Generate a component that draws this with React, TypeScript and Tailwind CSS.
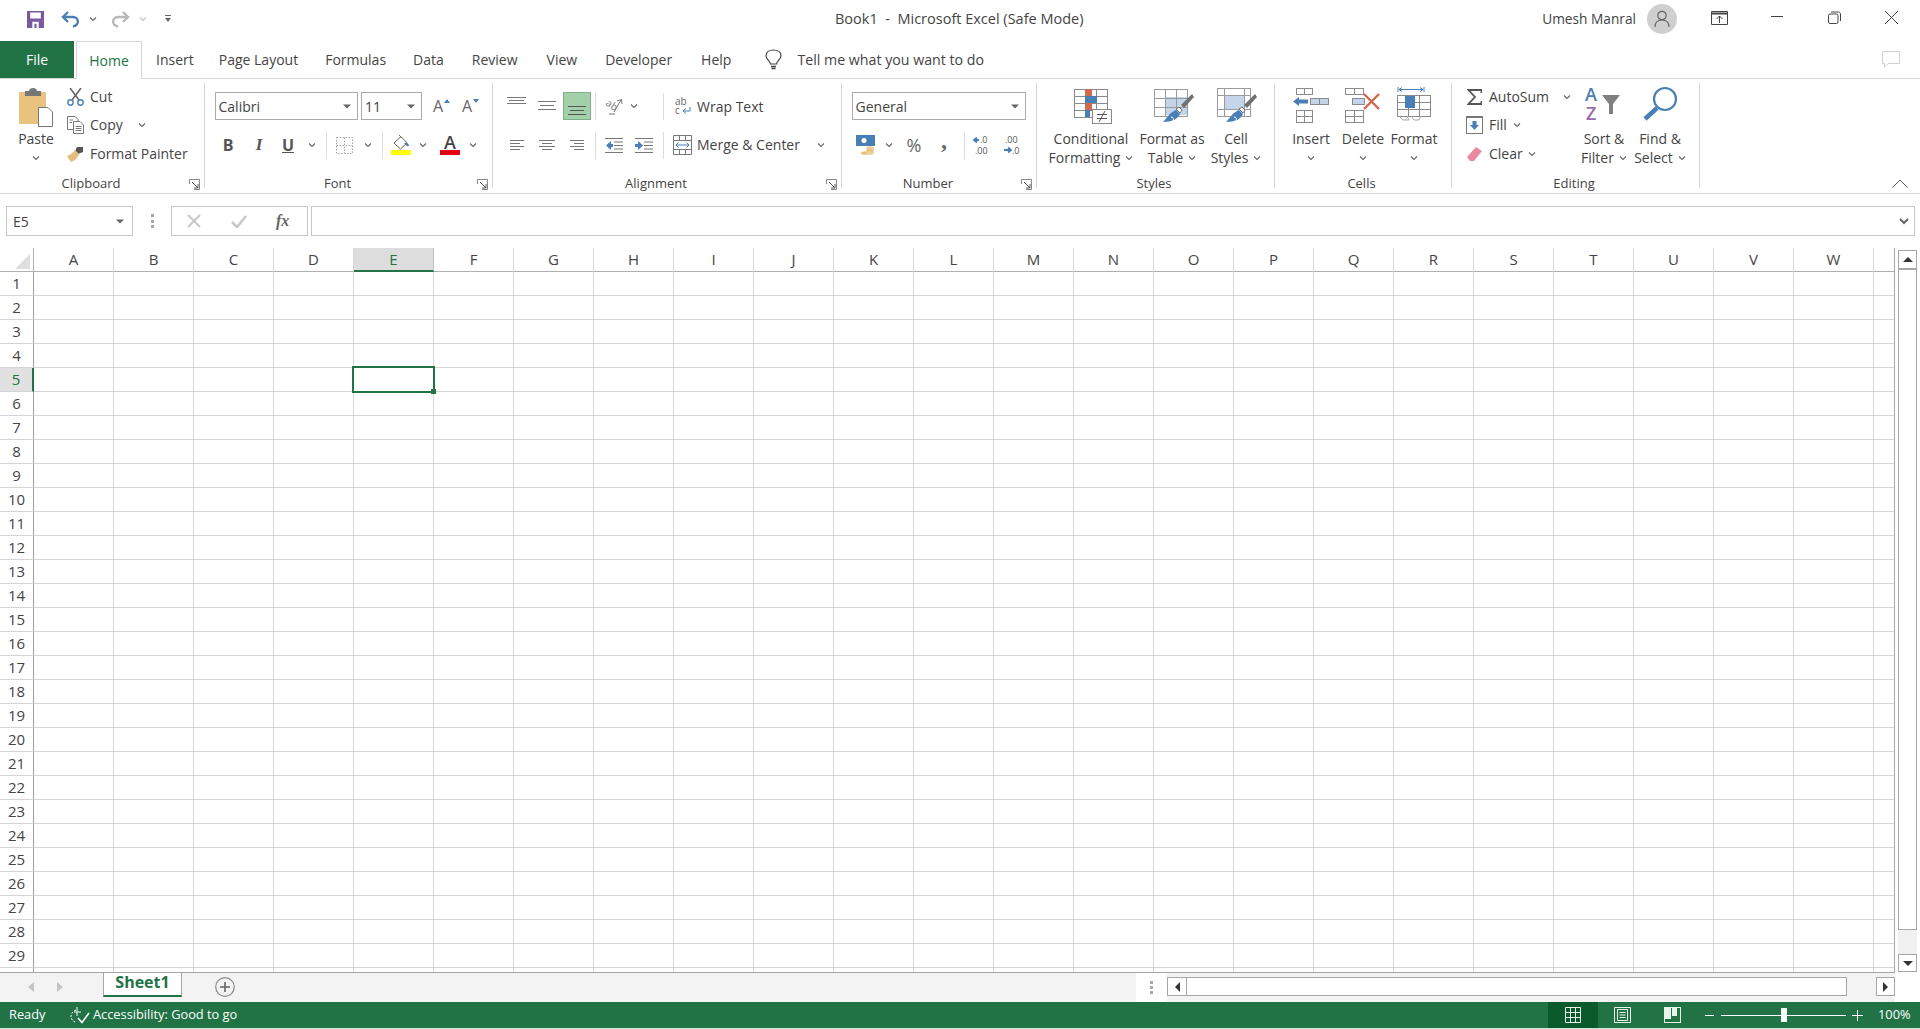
import React from "react";

const Chev = ({ className = "" }: { className?: string }) => (
  <svg width="8" height="6" viewBox="0 0 8 6" className={"flex-none " + className}>
    <path d="M1 1.5 L4 4.5 L7 1.5" fill="none" stroke="#666" strokeWidth="1.1" />
  </svg>
);

const Caret = ({ className = "" }: { className?: string }) => (
  <svg width="8" height="5" viewBox="0 0 8 5" className={"flex-none " + className}>
    <path d="M0 0.5 H8 L4 4.5 Z" fill="#666" />
  </svg>
);

const Sep = ({ className = "" }: { className?: string }) => (
  <div className={"w-px h-[27px] bg-[#dcdcdc] flex-none " + className} />
);

const Launcher = () => (
  <svg width="11" height="11" viewBox="0 0 11 11" className="flex-none mt-[4px] mr-[4px]">
    <path d="M0.5 5 V0.5 H10.5 V10.5 H5" fill="none" stroke="#888" />
    <path d="M3 3 L9 9 M9 5 V9 H5" fill="none" stroke="#555" />
  </svg>
);

const Lines = ({ w, h, rows, color = "#777", className = "" }: { w: number; h: number; rows: number[][]; color?: string; className?: string }) => (
  <svg width={w} height={h} viewBox={`0 0 ${w} ${h}`} className={"flex-none " + className}>
    {rows.map((r, i) => (
      <path key={i} d={`M${r[0]} ${r[2] + 0.5} H${r[1]}`} stroke={color} strokeWidth="1" />
    ))}
  </svg>
);

const Group = ({ w, label, launcher = false, children }: { w: string; label: string; launcher?: boolean; children: React.ReactNode }) => (
  <div className={"flex flex-col flex-none h-[105px] border-r border-[#d4d4d4] " + w}>
    <div className="h-[92px] flex-none">{children}</div>
    <div className="flex h-[13px]">
      <div className={"flex-1 text-center text-[13px] leading-[16px] text-[#444] " + (launcher ? "pr-[7px]" : "pr-[3px]")}>{label}</div>
      {launcher && <Launcher />}
    </div>
  </div>
);

const Row1 = ({ children }: { children: React.ReactNode }) => <div className="flex items-center h-[28px] mt-[9px]">{children}</div>;
const Row2 = ({ children }: { children: React.ReactNode }) => <div className="flex items-center h-[28px] mt-[11px]">{children}</div>;
const Small = ({ icon, label, tw, mt = "" }: { icon: React.ReactNode; label: string; tw: string; mt?: string }) => (
  <div className={"flex items-center h-[28px] " + mt}>
    <div className="w-[17px] flex-none flex justify-center">{icon}</div>
    <span className={"ml-[6px] flex-none whitespace-nowrap mt-[-2px] " + tw}>{label}</span>
  </div>
);

const Big = ({ icon, lines, w, ml = "", chevOwn = false }: { icon: React.ReactNode; lines: string[]; w: string; ml?: string; chevOwn?: boolean }) => (
  <div className={"flex flex-col items-center flex-none " + w + " " + ml}>
    <div className="h-[46px] pt-[5px] flex justify-center">{icon}</div>
    <div className="leading-[19px] text-center whitespace-nowrap">{lines[0]}</div>
    {chevOwn ? (
      <div className="h-[19px] flex items-center"><Chev /></div>
    ) : (
      <div className="leading-[19px] text-center whitespace-nowrap flex items-center">
        {lines[1]}
        <Chev className="ml-[5px]" />
      </div>
    )}
  </div>
);

const Brush = () => (
  <g>
    <path d="M38 6 L40 9 L30 20 L27 17 Z" fill="#707070" />
    <path d="M25 19 L28 22 L26 25 L22 21 Z" fill="#fff" stroke="#707070" />
    <path d="M22 22 L26 26 C24 31 18 34 9 34 C13 30 16 24 22 22 Z" fill="#4a80b8" />
    <path d="M17 29 C19 29 20 31 19 33" fill="none" stroke="#fff" strokeWidth="1" />
  </g>
);

const GridPath = ({ x, y, cw, ch, nx, ny, stroke = "#8a8a8a" }: { x: number; y: number; cw: number; ch: number; nx: number; ny: number; stroke?: string }) => {
  const ds: string[] = [];
  for (let i = 0; i <= nx; i++) ds.push(`M${x + i * cw + 0.5} ${y} V${y + ny * ch}`);
  for (let j = 0; j <= ny; j++) ds.push(`M${x} ${y + j * ch + 0.5} H${x + nx * cw + 1}`);
  return <path d={ds.join(" ")} stroke={stroke} strokeWidth="1" fill="none" />;
};

const ColumnHeads = "ABCDEFGHIJKLMNOPQRSTUVW".split("");

const Corner = () => (
  <svg width="15" height="15" viewBox="0 0 15 15"><path d="M15 0 V15 H0 Z" fill="#dfdfdf" /></svg>
);

export default function App() {
  const rows = Array.from({ length: 30 }, (_, i) => i + 1);
  return (
    <div className="w-[1920px] h-[1029px] flex flex-col overflow-hidden bg-white text-[14px] text-[#444] font-['Open_Sans','Noto_Sans',sans-serif]">
      {/* Title bar */}
      <div className="h-[41px] flex-none flex items-center text-[#444]">
        <svg width="17" height="17" viewBox="0 0 16 16" className="ml-[27px] flex-none mt-[-3px]">
          <path fillRule="evenodd" d="M0 0 H16 V16 H0 Z M3 1.5 V7 H13 V1.5 Z M5 10 V16 H11 V10 Z" fill="#7a5a9f" />
          <rect x="7" y="12" width="2" height="4" fill="#7a5a9f" />
        </svg>
        <svg width="20" height="17" viewBox="0 0 20 17" className="ml-[17px] flex-none mt-[-3px]">
          <path d="M7 1 L2 6 L7 11 M2 6 H12 C18 6 19 14 12 15.5" fill="none" stroke="#4a7fb5" strokeWidth="2.4" />
        </svg>
        <Chev className="ml-[8px] mt-[-3px]" />
        <svg width="20" height="17" viewBox="0 0 20 17" className="ml-[13px] flex-none mt-[-3px]">
          <path d="M13 1 L18 6 L13 11 M18 6 H8 C2 6 1 14 8 15.5" fill="none" stroke="#b8b8b8" strokeWidth="2.4" />
        </svg>
        <Chev className="ml-[9px] opacity-40 mt-[-3px]" />
        <svg width="8" height="8" viewBox="0 0 8 8" className="ml-[17px] flex-none mt-[-3px]">
          <path d="M1 0.5 H7" stroke="#666" />
          <path d="M1 3 H7 L4 7 Z" fill="#666" />
        </svg>
        <div className="flex-none w-[251px] ml-[663px] text-[14.5px] whitespace-nowrap mt-[-3px]">Book1&nbsp; -&nbsp; Microsoft Excel (Safe Mode)</div>
        <div className="flex-none ml-[454px] w-[96px] text-right text-[13.7px] whitespace-nowrap mt-[-3px]">Umesh Manral</div>
        <div className="w-[30px] h-[30px] rounded-full bg-[#cfcfcf] ml-[11px] flex-none flex items-center justify-center mt-[-3px]">
          <svg width="18" height="18" viewBox="0 0 18 18">
            <circle cx="9" cy="5.5" r="4.2" fill="none" stroke="#666" strokeWidth="1.2" />
            <path d="M2 17 C2 12 5 10 9 10 C13 10 16 12 16 17" fill="none" stroke="#666" strokeWidth="1.2" />
          </svg>
        </div>
        <svg width="17" height="14" viewBox="0 0 17 14" className="ml-[34px] flex-none mt-[-6px]">
          <path d="M0.5 0.5 H16.5 V13.5 H0.5 Z" fill="none" stroke="#444" />
          <path d="M1 2.5 H16" stroke="#444" strokeWidth="2" />
          <path d="M8.5 12 V5 M5.5 8 L8.5 5 L11.5 8" fill="none" stroke="#444" />
        </svg>
        <div className="w-[12px] h-px bg-[#444] ml-[43px] flex-none mt-[-8px]" />
        <svg width="13" height="13" viewBox="0 0 13 13" className="ml-[45px] flex-none mt-[-6px]">
          <rect x="0.5" y="3" width="9.5" height="9.5" rx="1.5" fill="none" stroke="#444" />
          <path d="M3 1 H10.5 C11.5 1 12.5 2 12.5 3 V10" fill="none" stroke="#444" />
        </svg>
        <svg width="15" height="15" viewBox="0 0 15 15" className="ml-[43px] flex-none mt-[-6px]">
          <path d="M1 1 L14 14 M14 1 L1 14" stroke="#444" />
        </svg>
      </div>

      {/* Tabs */}
      <div className="h-[38px] flex-none flex items-stretch border-b border-[#d4d4d4]">
        <div className="w-[74px] bg-[#217346] text-white flex items-center justify-center">File</div>
        <div className="w-[66px] ml-[2px] mb-[-1px] bg-white border border-b-0 border-[#d4d4d4] text-[#217346] flex items-center justify-center">Home</div>
        {[
          ["Insert", "ml-[14px]"],
          ["Page Layout", "ml-[25px]"],
          ["Formulas", "ml-[27px]"],
          ["Data", "ml-[27px]"],
          ["Review", "ml-[28px]"],
          ["View", "ml-[29px]"],
          ["Developer", "ml-[28px]"],
          ["Help", "ml-[29px]"],
        ].map(([t, c]) => (
          <div key={t} className={"flex items-center whitespace-nowrap " + c}>{t}</div>
        ))}
        <div className="flex items-center ml-[34px]">
          <svg width="17" height="21" viewBox="0 0 17 21">
            <path d="M5.5 15 C5.5 12 1 10.5 1 6.8 C1 3.3 4.2 1 8.5 1 C12.8 1 16 3.3 16 6.8 C16 10.5 11.5 12 11.5 15 Z" fill="none" stroke="#444" strokeWidth="1.2" />
            <path d="M6 17.5 H11 M6.5 19.5 H10.5" stroke="#444" strokeWidth="1.3" />
          </svg>
        </div>
        <div className="flex items-center ml-[15px] whitespace-nowrap text-[14.2px]">Tell me what you want to do</div>
        <div className="flex-1 flex items-center justify-end pr-[20px]">
          <svg width="18" height="17" viewBox="0 0 18 17">
            <path d="M0.5 0.5 H17.5 V12.5 H6 L2.5 16 V12.5 H0.5 Z" fill="none" stroke="#cfcfcf" />
          </svg>
        </div>
      </div>

      {/* Ribbon */}
      <div className="h-[115px] flex-none flex pt-[4px] border-b border-[#d4d4d4]">
        <Group w="w-[205px]" label="Clipboard" launcher>
          <div className="flex">
            <div className="w-[66px] ml-[3px] flex flex-col items-center flex-none">
              <div className="h-[46px] pt-[5px]">
                <svg width="34" height="39" viewBox="0 0 34 39">
                  <rect x="0" y="4" width="27" height="32" rx="1" fill="#e9c27f" />
                  <rect x="6" y="3" width="16" height="5" fill="#777" />
                  <path d="M10 3 C10 -1 18 -1 18 3 Z" fill="#777" />
                  <path d="M19.5 19.5 H29 L33.5 24 V38.5 H19.5 Z" fill="#fff" stroke="#777" />
                </svg>
              </div>
              <div className="leading-[19px]">Paste</div>
              <div className="h-[19px] flex items-center"><Chev /></div>
            </div>
            <div className="flex flex-col ml-[-2px] flex-none">
              <Small
                label="Cut"
                tw=""
                icon={
                  <svg width="17" height="18" viewBox="0 0 17 18">
                    <path d="M3 0 L12 12 M14 0 L5 12" stroke="#666" strokeWidth="1.6" />
                    <circle cx="3.5" cy="14.5" r="2.7" fill="none" stroke="#4a7fb5" strokeWidth="1.4" />
                    <circle cx="13.5" cy="14.5" r="2.7" fill="none" stroke="#4a7fb5" strokeWidth="1.4" />
                  </svg>
                }
              />
              <div className="flex items-center">
                <Small
                  label="Copy"
                  tw="w-[48px]"
                  icon={
                    <svg width="17" height="18" viewBox="0 0 17 18">
                      <path d="M0.5 0.5 H8 L11 3.5 V13.5 H0.5 Z" fill="#fff" stroke="#777" />
                      <path d="M6.5 5.5 H13 L16.5 9 V17.5 H6.5 Z" fill="#fff" stroke="#777" />
                      <path d="M8.5 10.5 H14.5 M8.5 12.5 H14.5 M8.5 14.5 H14.5 M2.5 4 H6 M2.5 6.5 H5" stroke="#777" />
                    </svg>
                  }
                />
                <Chev />
              </div>
              <Small
                label="Format Painter"
                tw=""
                mt="mt-[1px]"
                icon={
                  <svg width="17" height="16" viewBox="0 0 17 16">
                    <path d="M10 1 L16 1 L16 6 L11 8 L8 5 Z" fill="#555" />
                    <path d="M8 4 L12 8 C11 12 7 15 4 16 L0 10 C3 9 6 7 8 4 Z" fill="#e4bd7f" />
                  </svg>
                }
              />
            </div>
          </div>
        </Group>

        <Group w="w-[288px]" label="Font" launcher>
          <Row1>
            <div className="ml-[10px] w-[143px] h-[28px] border border-[#ababab] flex items-center justify-between px-[2.5px] pr-[6px]">
              <span>Calibri</span>
              <Caret />
            </div>
            <div className="ml-[3px] w-[61px] h-[28px] border border-[#ababab] flex items-center justify-between pl-[3px] pr-[6px]">
              <span>11</span>
              <Caret />
            </div>
            <div className="ml-[11px] w-[13px] text-[16px] leading-none text-[#666] flex-none">A</div>
            <svg width="6" height="4" viewBox="0 0 6 4" className="flex-none mb-[11px] ml-[-2px]"><path d="M0 4 L3 0 L6 4 Z" fill="#4a7fb5" /></svg>
            <div className="ml-[12px] w-[13px] text-[16px] leading-none text-[#666] flex-none">A</div>
            <svg width="6" height="4" viewBox="0 0 6 4" className="flex-none mb-[11px] ml-[-2px]"><path d="M0 0 L3 4 L6 0 Z" fill="#4a7fb5" /></svg>
          </Row1>
          <Row2>
            <div className="ml-[11px] w-[24px] text-center text-[16px] font-bold text-[#555] flex-none">B</div>
            <div className="ml-[7px] w-[24px] text-center text-[17px] font-bold italic text-[#555] flex-none font-['Liberation_Serif',serif]">I</div>
            <div className="ml-[5px] w-[24px] text-center text-[16px] font-bold text-[#555] flex-none underline">U</div>
            <Chev className="ml-[8px]" />
            <Sep className="ml-[10px]" />
            <svg width="17" height="17" viewBox="0 0 17 17" className="ml-[9px] flex-none">
              <path d="M0.5 0.5 H16.5 V16.5 H0.5 Z M0.5 8.5 H16.5 M8.5 0.5 V16.5" fill="none" stroke="#a5a5a5" strokeDasharray="1.5 1.5" />
            </svg>
            <Chev className="ml-[11px]" />
            <Sep className="ml-[10px]" />
            <svg width="20" height="20" viewBox="0 0 20 20" className="ml-[8px] flex-none">
              <path d="M3 8 L10 1.5 L16 8 L9.5 14 Z" fill="#fff" stroke="#666" />
              <path d="M8 0 L11 3" stroke="#666" />
              <path d="M13 8 L16 7.5 L18 10 C18 11.5 16 11.5 15.5 10.5 Z" fill="#4a7fb5" />
              <rect x="0" y="15" width="20" height="5" fill="#ffff00" />
            </svg>
            <Chev className="ml-[8px]" />
            <div className="ml-[13px] w-[20px] flex flex-col items-center flex-none">
              <div className="text-[18px] leading-[15px] font-semibold text-[#444]">A</div>
              <div className="w-[20px] h-[5px] bg-[#e60012]" />
            </div>
            <Chev className="ml-[9px]" />
          </Row2>
        </Group>

        <Group w="w-[349px]" label="Alignment" launcher>
          <Row1>
            <Lines className="ml-[14px] mb-[10px]" w={19} h={8} rows={[[0, 19, 0], [2, 17, 3], [0, 19, 6]]} />
            <Lines className="ml-[12px]" w={18} h={10} rows={[[0, 18, 0], [2, 16, 4], [0, 18, 8]]} />
            <div className="ml-[7px] w-[28px] h-[28px] bg-[#a3cfa9] border border-[#7fb08a] flex items-end justify-center pb-[4px] flex-none">
              <Lines w={18} h={9} rows={[[0, 18, 0], [2, 16, 4], [0, 18, 8]]} color="#555" />
            </div>
            <Sep className="ml-[4px]" />
            <svg width="19" height="17" viewBox="0 0 19 17" className="ml-[8px] flex-none overflow-visible">
              <text x="1" y="11" fontSize="10" fill="#777" transform="rotate(35 8 9)" fontFamily="Open Sans">ab</text>
              <path d="M5 16 L11 16 M17 2 L10 14 M13 3 L17.5 1.5 L18 6" fill="none" stroke="#777" />
            </svg>
            <Chev className="ml-[7px]" />
            <Sep className="ml-[25px]" />
            <svg width="17" height="18" viewBox="0 0 17 18" className="ml-[11px] flex-none overflow-visible">
              <text x="0" y="8" fontSize="10" fill="#666" fontFamily="Open Sans">ab</text>
              <text x="0" y="17" fontSize="10" fill="#666" fontFamily="Open Sans">c</text>
              <path d="M15 10 V14 H8 M11 11.5 L8 14 L11 16.5" fill="none" stroke="#4a7fb5" />
            </svg>
            <span className="ml-[5px] whitespace-nowrap">Wrap Text</span>
          </Row1>
          <Row2>
            <Lines className="ml-[17px]" w={14} h={11} rows={[[0, 14, 0], [0, 10, 3], [0, 14, 6], [0, 10, 9]]} />
            <Lines className="ml-[15px]" w={16} h={11} rows={[[0, 16, 0], [3, 13, 3], [0, 16, 6], [3, 13, 9]]} />
            <Lines className="ml-[15px]" w={14} h={11} rows={[[0, 14, 0], [4, 14, 3], [0, 14, 6], [4, 14, 9]]} />
            <Sep className="ml-[11px]" />
            <svg width="18" height="17" viewBox="0 0 18 17" className="ml-[9px] flex-none">
              <path d="M0 1.5 H18 M9 5 H18 M9 8.5 H18 M9 12 H18 M0 15.5 H18" stroke="#777" />
              <path d="M6 4 L1 8.5 L6 13 V10 H8 V7 H6 Z" fill="#4a7fb5" />
            </svg>
            <svg width="18" height="17" viewBox="0 0 18 17" className="ml-[12px] flex-none">
              <path d="M0 1.5 H18 M9 5 H18 M9 8.5 H18 M9 12 H18 M0 15.5 H18" stroke="#777" />
              <path d="M3 4 L8 8.5 L3 13 V10 H0 V7 H3 Z" fill="#4a7fb5" />
            </svg>
            <Sep className="ml-[10px]" />
            <svg width="19" height="20" viewBox="0 0 19 20" className="ml-[9px] flex-none">
              <path d="M0.5 0.5 H18.5 V19.5 H0.5 Z M0.5 5.5 H18.5 M0.5 14.5 H18.5 M6.5 0.5 V5.5 M12.5 0.5 V5.5 M6.5 14.5 V19.5 M12.5 14.5 V19.5" fill="none" stroke="#777" />
              <path d="M3 10 H16 M5.5 7.5 L3 10 L5.5 12.5 M13.5 7.5 L16 10 L13.5 12.5" fill="none" stroke="#4a7fb5" />
            </svg>
            <span className="ml-[5px] w-[120px] flex-none whitespace-nowrap mt-[-2px]">Merge &amp; Center</span>
            <Chev />
          </Row2>
        </Group>

        <Group w="w-[195px]" label="Number" launcher>
          <Row1>
            <div className="ml-[10px] w-[174px] h-[28px] border border-[#ababab] flex items-center justify-between pl-[2.5px] pr-[6px]">
              <span>General</span>
              <Caret />
            </div>
          </Row1>
          <Row2>
            <svg width="19" height="20" viewBox="0 0 19 20" className="ml-[14px] flex-none">
              <rect x="0" y="0" width="19" height="11" fill="#4a7fb5" />
              <circle cx="8" cy="5.5" r="2.5" fill="#fff" />
              <ellipse cx="14" cy="13" rx="4" ry="1.8" fill="#eccf9c" />
              <ellipse cx="14" cy="15.5" rx="4" ry="1.8" fill="#e6c17f" />
              <ellipse cx="9" cy="18" rx="4" ry="1.8" fill="#e6c17f" />
              <ellipse cx="14" cy="18" rx="4" ry="1.8" fill="#eccf9c" />
            </svg>
            <Chev className="ml-[10px]" />
            <div className="ml-[13px] w-[16px] text-center flex-none text-[18px] leading-none text-[#666]">%</div>
            <div className="ml-[18px] w-[8px] text-center flex-none text-[24px] font-bold leading-none text-[#666] font-['Liberation_Serif',serif] mb-[10px]">,</div>
            <Sep className="ml-[16px]" />
            <svg width="17" height="20" viewBox="0 0 17 20" className="ml-[8px] flex-none overflow-visible">
              <text x="7" y="8" fontSize="9" fill="#555" fontFamily="Open Sans">.0</text>
              <text x="2" y="19" fontSize="9" fill="#555" fontFamily="Open Sans">.00</text>
              <path d="M6 5 H2 M4 2.5 L1 5 L4 7.5" fill="none" stroke="#4a7fb5" strokeWidth="1.8" />
            </svg>
            <svg width="17" height="20" viewBox="0 0 17 20" className="ml-[13px] flex-none overflow-visible">
              <text x="2" y="8" fontSize="9" fill="#555" fontFamily="Open Sans">.00</text>
              <text x="9" y="19" fontSize="9" fill="#555" fontFamily="Open Sans">.0</text>
              <path d="M1 15 H7 M5 12.5 L8 15 L5 17.5" fill="none" stroke="#4a7fb5" strokeWidth="1.8" />
            </svg>
          </Row2>
        </Group>

        <Group w="w-[238px]" label="Styles">
          <div className="flex">
            <Big
              ml="ml-[10px]"
              w="w-[88px]"
              lines={["Conditional", "Formatting"]}
              icon={
                <svg width="38" height="36" viewBox="0 0 38 36" className="ml-[3px]">
                  <GridPath x={0} y={1} cw={11} ch={7} nx={3} ny={4} />
                  <rect x="11" y="1" width="7" height="7" fill="#cf6a4e" />
                  <rect x="11" y="8" width="12" height="7" fill="#4a7fb5" />
                  <rect x="11" y="15" width="7" height="7" fill="#cf6a4e" />
                  <rect x="11" y="22" width="5" height="7" fill="#4a7fb5" />
                  <rect x="18.5" y="21.5" width="19" height="14" fill="#fff" stroke="#8a8a8a" />
                  <path d="M23 26.5 H33 M23 30.5 H33 M25 34 L31 23" stroke="#555" />
                </svg>
              }
            />
            <Big
              ml="ml-[2px]"
              w="w-[70px]"
              lines={["Format as", "Table"]}
              icon={
                <svg width="40" height="36" viewBox="0 0 40 36" className="ml-[4px]">
                  <rect x="11" y="9" width="22" height="18" fill="#c5d5e9" />
                  <GridPath x={0} y={1} cw={11} ch={9} nx={3} ny={3} stroke="#9a9a9a" />
                  <Brush />
                </svg>
              }
            />
            <Big
              ml="ml-[3px]"
              w="w-[52px]"
              lines={["Cell", "Styles"]}
              icon={
                <svg width="40" height="36" viewBox="0 0 40 36" className="ml-[2px]">
                  <rect x="0.5" y="0.5" width="33" height="28" fill="#fff" stroke="#9a9a9a" />
                  <path d="M0 7.5 H33 M0 21.5 H33 M7.5 0 V28 M27.5 0 V28" stroke="#9a9a9a" />
                  <rect x="8" y="8" width="19" height="13" fill="#c5d5e9" />
                  <Brush />
                </svg>
              }
            />
          </div>
        </Group>

        <Group w="w-[177px]" label="Cells">
          <div className="flex">
            <Big
              chevOwn
              ml="ml-[11px]"
              w="w-[50px]"
              lines={["Insert"]}
              icon={
                <svg width="36" height="36" viewBox="0 0 36 36" className="mt-[-1px]">
                  <GridPath x={3} y={1} cw={8} ch={6} nx={2} ny={1} />
                  <GridPath x={3} y={23} cw={8} ch={6} nx={2} ny={2} />
                  <rect x="17.5" y="11.5" width="18" height="6" fill="#c5d5e9" stroke="#8a8a8a" />
                  <path d="M26.5 11 V18" stroke="#8a8a8a" />
                  <path d="M15 12.5 H6 V10 L0 14.5 L6 19 V16.5 H15 Z" fill="#4a7fb5" />
                </svg>
              }
            />
            <Big
              chevOwn
              w="w-[54px]"
              lines={["Delete"]}
              icon={
                <svg width="36" height="36" viewBox="0 0 36 36" className="mt-[-1px]">
                  <GridPath x={0} y={1} cw={9} ch={6} nx={2} ny={1} />
                  <GridPath x={0} y={23} cw={9} ch={6} nx={2} ny={2} />
                  <rect x="7.5" y="11.5" width="12" height="6" fill="#c5d5e9" stroke="#8a8a8a" />
                  <path d="M19 7 L34 22 M34 7 L19 22" stroke="#d3674d" strokeWidth="2.4" />
                </svg>
              }
            />
            <Big
              chevOwn
              w="w-[48px]"
              lines={["Format"]}
              icon={
                <svg width="34" height="37" viewBox="0 0 34 37" className="mt-[-1px]">
                  <path d="M1 0 V5 M27 0 V5" stroke="#4a7fb5" />
                  <path d="M2 2.5 H26 M5 0.5 L2 2.5 L5 4.5 M23 0.5 L26 2.5 L23 4.5" fill="none" stroke="#4a7fb5" />
                  <GridPath x={0} y={8} cw={11} ch={7} nx={3} ny={3} />
                  <rect x="8" y="9" width="10" height="12" fill="#4a7fb5" />
                  <path d="M2 29 L6 33 H12 L10 29 M14 29 L17 33 H22 L24 29" fill="none" stroke="#aaa" />
                </svg>
              }
            />
          </div>
        </Group>

        <Group w="w-[248px]" label="Editing">
          <div className="flex">
            <div className="ml-[14px] w-[111px] flex-none flex flex-col">
              <div className="flex items-center">
                <Small
                  label="AutoSum"
                  tw="w-[74px]"
                  icon={
                    <svg width="15" height="16" viewBox="0 0 15 16">
                      <path d="M14.5 4 V1 H1.5 L8 8 L1.5 15 H14.5 V12" fill="none" stroke="#555" strokeWidth="1.8" />
                    </svg>
                  }
                />
                <Chev />
              </div>
              <div className="flex items-center">
                <Small
                  label="Fill"
                  tw="w-[24px]"
                  icon={
                    <svg width="17" height="18" viewBox="0 0 17 18">
                      <rect x="0.5" y="1.5" width="16" height="16" fill="#fff" stroke="#777" />
                      <path d="M0 1 H17" stroke="#777" strokeWidth="2" />
                      <path d="M6.5 5 H10.5 V9 H13 L8.5 14 L4 9 H6.5 Z" fill="#4a7fb5" />
                    </svg>
                  }
                />
                <Chev />
              </div>
              <div className="flex items-center mt-[1px]">
                <Small
                  label="Clear"
                  tw="w-[39px]"
                  icon={
                    <svg width="17" height="16" viewBox="0 0 17 16">
                      <path d="M10 1 L16 5 L8 15 H4 L1 11 Z" fill="#e8899d" />
                    </svg>
                  }
                />
                <Chev />
              </div>
            </div>
            <Big
              w="w-[54px]"
              lines={["Sort &", "Filter"]}
              icon={
                <svg width="36" height="36" viewBox="0 0 36 36" className="mt-[-2px] ml-[-2px] overflow-visible">
                  <text x="0" y="15" fontSize="18" fontWeight="600" fill="#4a7fb5" fontFamily="Open Sans">A</text>
                  <text x="1" y="34" fontSize="18" fontWeight="600" fill="#9b69a9" fontFamily="Open Sans">Z</text>
                  <path d="M17 9 H35 L28 18 V28 H24 V18 Z" fill="#808080" />
                </svg>
              }
            />
            <Big
              ml="ml-[1px]"
              w="w-[56px]"
              lines={["Find &", "Select"]}
              icon={
                <svg width="36" height="36" viewBox="0 0 36 36" className="mt-[-2px]">
                  <circle cx="23" cy="13" r="11" fill="none" stroke="#4a7fb5" strokeWidth="2.2" />
                  <path d="M15 22 L3 33" stroke="#4a7fb5" strokeWidth="4.5" />
                </svg>
              }
            />
          </div>
        </Group>

        <div className="flex-1 flex items-start justify-end pt-[96px] pr-[12px]">
          <svg width="16" height="9" viewBox="0 0 16 9">
            <path d="M0.5 8.5 L8 1 L15.5 8.5" fill="none" stroke="#555" />
          </svg>
        </div>
      </div>

      {/* Formula bar */}
      <div className="h-[54px] flex-none flex pt-[12px]">
        <div className="ml-[6px] w-[127px] h-[30px] border border-[#c6c6c6] flex items-center justify-between pl-[6px] pr-[8px] flex-none">
          <span>E5</span>
          <Caret />
        </div>
        <div className="w-[38px] h-[30px] flex flex-col items-center justify-center gap-[2.5px] flex-none">
          <div className="w-[3px] h-[3px] bg-[#a8a8a8]" />
          <div className="w-[3px] h-[3px] bg-[#a8a8a8]" />
          <div className="w-[3px] h-[3px] bg-[#a8a8a8]" />
        </div>
        <div className="w-[137px] h-[30px] border border-[#c6c6c6] flex items-center flex-none">
          <svg width="14" height="14" viewBox="0 0 14 14" className="ml-[15px] flex-none">
            <path d="M1 1 L13 13 M13 1 L1 13" stroke="#c8c8c8" strokeWidth="2" />
          </svg>
          <svg width="16" height="13" viewBox="0 0 16 13" className="ml-[30px] flex-none">
            <path d="M1 7 L6 12 L15 1" fill="none" stroke="#c8c8c8" strokeWidth="2.6" />
          </svg>
          <span className="ml-[29px] font-['Liberation_Serif',serif] italic font-bold text-[16px] text-[#666]">fx</span>
        </div>
        <div className="ml-[3px] w-[1604px] h-[30px] border border-[#c6c6c6] flex items-center justify-end pr-[5px] flex-none">
          <svg width="10" height="7" viewBox="0 0 10 7">
            <path d="M1 1 L5 5 L9 1" fill="none" stroke="#666" strokeWidth="2" />
          </svg>
        </div>
      </div>

      {/* Grid + vertical scrollbar */}
      <div className="h-[725px] flex-none flex">
        <div className="w-[1895px] flex-none overflow-hidden border-r border-b border-[#a6a6a6]">
          <div className="flex h-[24px]">
            <div className="w-[34px] flex-none border-r border-b border-[#b0b0b0] flex items-end justify-end pr-[3px] pb-[2px]">
              <Corner />
            </div>
            {ColumnHeads.map((c) => (
              <div
                key={c}
                className={
                  "w-[80px] flex-none flex items-center justify-center text-[15px] " +
                  (c === "E"
                    ? "bg-[#dddddd] text-[#217346] border-r border-[#c0c0c0] border-b-2 border-b-[#217346]"
                    : "border-r border-[#d8d8d8] border-b border-b-[#b0b0b0]")
                }
              >
                {c}
              </div>
            ))}
            <div className="flex-1 border-b border-[#b0b0b0]" />
          </div>
          {rows.map((r) => (
            <div key={r} className="flex h-[24px]">
              <div
                className={
                  "w-[34px] flex-none flex items-center justify-center text-[15px] border-b border-[#d4d4d4] " +
                  (r === 5 ? "bg-[#e1e1e1] text-[#217346] border-r-2 border-r-[#217346]" : "border-r border-r-[#9f9f9f]")
                }
              >
                {r}
              </div>
              {ColumnHeads.map((c) => (
                <div key={c} className="w-[80px] flex-none border-r border-b border-[#d4d4d4] relative">
                  {r === 5 && c === "E" && (
                    <div className="absolute left-[-2px] top-[-2px] w-[83px] h-[27px] border-2 border-[#217346] z-10">
                      <div className="absolute right-[-3px] bottom-[-3px] w-[5px] h-[5px] bg-[#217346]" />
                    </div>
                  )}
                </div>
              ))}
              <div className="flex-1 border-b border-[#d4d4d4]" />
            </div>
          ))}
        </div>
        <div className="w-[25px] flex-none flex">
          <div className="ml-[3px] w-[19px] flex-none flex flex-col pt-[2px] h-[725px]">
            <div className="h-[19px] flex-none border border-[#a6a6a6] flex items-center justify-center bg-white">
              <svg width="10" height="5" viewBox="0 0 10 5"><path d="M0 5 L5 0 L10 5 Z" fill="#333" /></svg>
            </div>
            <div className="h-[661px] flex-none border border-[#a6a6a6] bg-white" />
            <div className="h-[24px] flex-none bg-[#f1f1f1]" />
            <div className="h-[18px] flex-none border border-[#a6a6a6] flex items-center justify-center bg-white">
              <svg width="10" height="5" viewBox="0 0 10 5"><path d="M0 0 L5 5 L10 0 Z" fill="#333" /></svg>
            </div>
          </div>
        </div>
      </div>

      {/* Sheet tabs */}
      <div className="h-[29px] flex-none flex">
        <div className="w-[1136px] flex-none bg-[#f3f3f3] flex items-start">
          <svg width="6" height="10" viewBox="0 0 6 10" className="ml-[28px] mt-[9px] flex-none"><path d="M6 0 L0 5 L6 10 Z" fill="#c4c4c4" /></svg>
          <svg width="6" height="10" viewBox="0 0 6 10" className="ml-[23px] mt-[9px] flex-none"><path d="M0 0 L6 5 L0 10 Z" fill="#c4c4c4" /></svg>
          <div className="ml-[40px] w-[79px] h-[25px] mt-[-1px] bg-white border-x border-t border-[#a6a6a6] border-b-2 border-b-[#217346] flex items-center justify-center text-[16px] leading-none pb-[4px] font-bold text-[#217346] flex-none">
            Sheet1
          </div>
          <svg width="20" height="20" viewBox="0 0 20 20" className="ml-[33px] mt-[4px] flex-none">
            <circle cx="10" cy="10" r="9.3" fill="none" stroke="#8a8a8a" strokeWidth="1.2" />
            <path d="M10 5 V15 M5 10 H15" stroke="#666" strokeWidth="1.6" />
          </svg>
        </div>
        <div className="w-[31px] flex-none bg-white flex flex-col items-center justify-center gap-[2px] pr-[1px] pb-[1px]">
          <div className="w-[3px] h-[3px] bg-[#a8a8a8]" />
          <div className="w-[3px] h-[3px] bg-[#a8a8a8]" />
          <div className="w-[3px] h-[3px] bg-[#a8a8a8]" />
        </div>
        <div className="w-[728px] flex-none bg-[#f3f3f3] flex items-start pt-[4px]">
          <div className="w-[20px] h-[19px] flex-none border border-[#a6a6a6] bg-white flex items-center justify-center">
            <svg width="5" height="10" viewBox="0 0 5 10"><path d="M5 0 L0 5 L5 10 Z" fill="#333" /></svg>
          </div>
          <div className="w-[660px] h-[19px] flex-none border border-l-0 border-[#a6a6a6] bg-white" />
          <div className="w-[29px] flex-none" />
          <div className="w-[19px] h-[19px] flex-none border border-[#a6a6a6] bg-white flex items-center justify-center">
            <svg width="5" height="10" viewBox="0 0 5 10"><path d="M0 0 L5 5 L0 10 Z" fill="#333" /></svg>
          </div>
        </div>
        <div className="flex-1 bg-white" />
      </div>

      {/* Status bar */}
      <div className="h-[26px] flex-none bg-[#217346] text-white flex items-stretch text-[12.8px] leading-none">
        <div className="ml-[9px] flex items-center w-[61px] flex-none pb-[2px]">Ready</div>
        <div className="flex items-center flex-none">
          <svg width="20" height="17" viewBox="0 0 20 17">
            <path d="M6 3 C-1 6 0 13 5 15" fill="none" stroke="#fff" strokeDasharray="2 1.5" />
            <path d="M7 0 V4 M4 5 H11 M7 5 V9" stroke="#fff" />
            <path d="M8 11 L12 15.5 L19 6" fill="none" stroke="#fff" strokeWidth="1.6" />
          </svg>
          <span className="ml-[3px] whitespace-nowrap mt-[-2px]">Accessibility: Good to go</span>
        </div>
        <div className="flex-1" />
        <div className="w-[50px] bg-[#0a5a2c] flex items-center justify-center flex-none">
          <svg width="16" height="16" viewBox="0 0 16 16">
            <path d="M0.5 0.5 H15.5 V15.5 H0.5 Z M0.5 5.5 H15.5 M0.5 10.5 H15.5 M5.5 0.5 V15.5 M10.5 0.5 V15.5" fill="none" stroke="#e8f3ec" />
          </svg>
        </div>
        <div className="ml-[16px] flex items-center flex-none">
          <svg width="17" height="16" viewBox="0 0 17 16">
            <path d="M0.5 0.5 H16.5 V15.5 H0.5 Z M3.5 2.5 H13.5 V13.5 H3.5 Z M5.5 5.5 H11.5 M5.5 8 H11.5 M5.5 10.5 H11.5" fill="none" stroke="#e8f3ec" />
          </svg>
        </div>
        <div className="ml-[33px] flex items-center flex-none">
          <svg width="17" height="16" viewBox="0 0 17 16">
            <rect x="0.5" y="0.5" width="16" height="15" fill="none" stroke="#e8f3ec" />
            <rect x="1" y="1" width="6" height="11" fill="#e8f3ec" />
            <rect x="8" y="1" width="5" height="8" fill="#e8f3ec" />
          </svg>
        </div>
        <div className="ml-[24px] w-[9px] h-px bg-white self-center flex-none" />
        <div className="ml-[7px] flex items-center w-[125px] flex-none">
          <div className="w-[60px] h-px bg-white flex-none" />
          <div className="w-[6px] h-[14px] bg-white flex-none" />
          <div className="w-[59px] h-px bg-white flex-none" />
        </div>
        <svg width="11" height="11" viewBox="0 0 11 11" className="ml-[6px] flex-none self-center">
          <path d="M0 5.5 H11 M5.5 0 V11" stroke="#fff" />
        </svg>
        <div className="ml-[15px] w-[42px] flex items-center flex-none pb-[2px]">100%</div>
      </div>
      <div className="h-px flex-none bg-[#cfe8dd]" />
    </div>
  );
}
